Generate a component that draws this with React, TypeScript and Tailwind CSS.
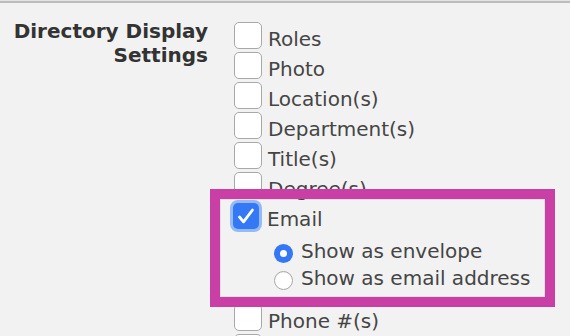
import React from 'react';

const rowText = 'pt-[7px] leading-[22px] text-[20px] text-[#454545] whitespace-nowrap';

const CheckRow = ({ label, checked = false }: { label: string; checked?: boolean }) => (
  <div className="flex h-[30px] items-start">
    {checked ? (
      <span className="mt-[2px] ml-[-1px] mr-[2px] flex h-[26px] w-[26px] items-center justify-center rounded-[5px] bg-[#3478f6] ring-[3px] ring-[#94bbf5]">
        <svg width="26" height="26" viewBox="0 0 26 26" fill="none">
          <path d="M6.5 14l4 4.8L19.5 7" stroke="white" strokeWidth="2.8" strokeLinecap="round" strokeLinejoin="round" />
        </svg>
      </span>
    ) : (
      <span className="mt-px h-[27px] w-[28px] shrink-0 rounded-[5px] border border-[#a8a8a8] bg-white" />
    )}
    {label && <span className={`ml-[6px] ${rowText}`}>{label}</span>}
  </div>
);

const RadioRow = ({ label, selected = false }: { label: string; selected?: boolean }) => (
  <div className="flex h-[27px] items-center">
    {selected ? (
      <span className="flex h-[19px] w-[19px] items-center justify-center rounded-full bg-[#3478f6]">
        <span className="h-[7px] w-[7px] rounded-full bg-white" />
      </span>
    ) : (
      <span className="h-[19px] w-[19px] rounded-full border border-[#a8a8a8] bg-white shadow-[inset_0_1px_1px_rgba(0,0,0,0.06)]" />
    )}
    <span className="ml-[8px] pb-[5px] text-[20px] leading-[22px] text-[#454545] whitespace-nowrap">{label}</span>
  </div>
);

export default function App() {
  return (
    <div className="h-[336px] w-[570px] overflow-hidden bg-[#f2f2f2] font-['DejaVu_Sans',sans-serif]">
      <div className="h-px bg-[#e2e2e2]" />
      <div className="h-[2px] bg-[#bcbcbc]" />
      <div className="flex pt-[16px]">
        <div className="w-[208px] text-right text-[20px] font-bold leading-[24px] text-[#333333]">
          <div>Directory Display</div>
          <div>Settings</div>
        </div>
        <div className="ml-[26px] flex flex-col pt-[2px]">
          <CheckRow label="Roles" />
          <CheckRow label="Photo" />
          <CheckRow label="Location(s)" />
          <CheckRow label="Department(s)" />
          <CheckRow label="Title(s)" />
          <CheckRow label="Degree(s)" />
          <div className="relative">
            <CheckRow label="Email" checked />
            <div className="mt-[9px] pl-[40px]">
              <RadioRow label="Show as envelope" selected />
              <RadioRow label="Show as email address" />
            </div>
            <div className="pointer-events-none absolute left-[-24px] top-[-12px] h-[118px] w-[345px] border-[10px] border-[#c93fa6] shadow-[inset_0_0_0_1px_rgba(0,0,0,0.07)]" />
          </div>
          <div className="mt-[9px]">
            <CheckRow label="Phone #(s)" />
            <CheckRow label="" />
          </div>
        </div>
      </div>
    </div>
  );
}
